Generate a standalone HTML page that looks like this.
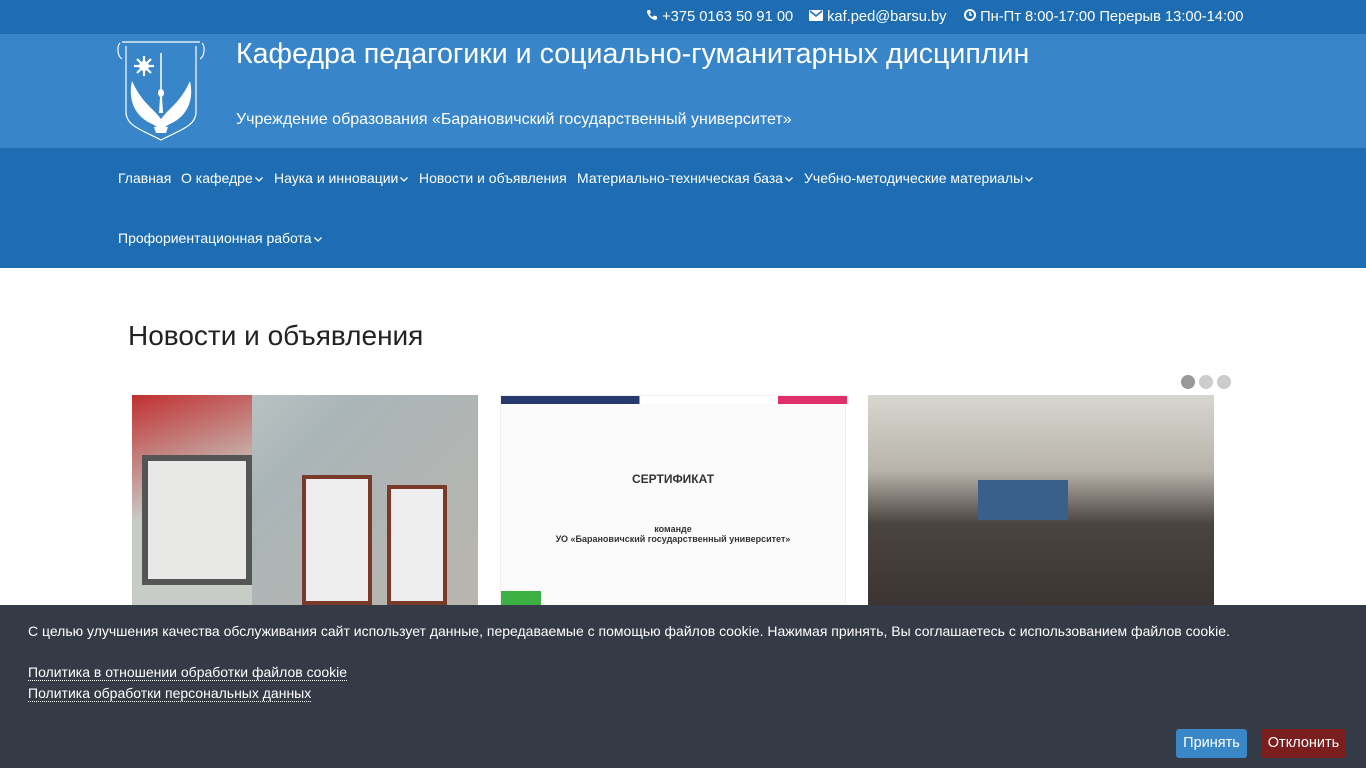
<!DOCTYPE html>
<html><head><meta charset="utf-8"><style>
*{margin:0;padding:0;box-sizing:border-box}
body{width:1366px;height:768px;overflow:hidden;font-family:"Liberation Sans",sans-serif;background:#fff;position:relative}
.top{height:34px;background:#1e6db3;color:#fff;font-size:14.7px;position:relative}
.top span{position:absolute;top:9px}
.head{height:114px;background:#3886c9;position:relative;color:#fff}
.head h1{position:absolute;left:236px;top:4px;font-weight:normal;font-size:28.6px}
.head p{position:absolute;left:236px;top:77px;font-size:16px}
.nav{height:120px;background:#1e6db3;color:#fff;font-size:14px;position:relative}
.nav span{position:absolute;white-space:nowrap}
.nav svg{margin-left:2px;vertical-align:1px}
h2{position:absolute;left:128px;top:320px;font-weight:normal;font-size:28px;color:#222}
.dot{position:absolute;top:375px;width:14px;height:14px;border-radius:50%;background:#ccc}
.card{position:absolute;top:395px;width:346px;height:215px}
.ck{position:absolute;left:0;top:605px;width:1366px;height:163px;background:#343a46;color:#fff;font-size:14px}
.ck a{color:#fff;text-decoration:none;border-bottom:1px dotted #fff;position:absolute;left:28px}
.btn{position:absolute;top:124px;height:29px;border-radius:3px;font-size:14.5px;line-height:29px;text-align:center}
</style></head><body>
<div class="top">
<span style="left:646px"><svg width="12" height="12" viewBox="0 0 12 12"><path d="M2 1l2 0 1 3-1.5 1a6 6 0 0 0 3 3L8 6.5l3 1v2c0 1-1 1.5-2 1.5C5 10 2 7 1 3c0-1 .5-2 1-2z" fill="#fff"/></svg> +375 0163 50 91 00</span>
<span style="left:809px"><svg width="14" height="11" viewBox="0 0 14 11"><rect width="14" height="11" rx="1" fill="#fff"/><path d="M1 1l6 5 6-5" stroke="#1e6db3" stroke-width="1.5" fill="none"/></svg> kaf.ped@barsu.by</span>
<span style="left:964px"><svg width="12" height="12" viewBox="0 0 12 12"><circle cx="6" cy="6" r="5" stroke="#fff" stroke-width="2" fill="none"/><path d="M6 3v3h2" stroke="#fff" stroke-width="1.5" fill="none"/></svg> Пн-Пт 8:00-17:00 Перерыв 13:00-14:00</span>
</div>
<div class="head">
<svg style="position:absolute;left:116px;top:5px" width="90" height="102" viewBox="0 0 90 102">
<path d="M6 3h78M10 7v66c0 14 16 18 35 28 19-10 35-14 35-28V7" fill="none" stroke="#fff" stroke-width="1.2"/>
<path d="M4 4c-3 3-3 13 2 16M86 4c3 3 3 13-2 16" fill="none" stroke="#fff" stroke-width="1.2"/>
<g fill="#fff"><circle cx="28" cy="27" r="5"/><path d="M28 17v20M18 27h20M21 20l14 14M35 20L21 34" stroke="#fff" stroke-width="2.2"/>
<path d="M45 14v40" stroke="#fff" stroke-width="1.5"/><ellipse cx="45" cy="54" rx="3" ry="4"/><path d="M44 58h2l1 16h-4z"/>
<path d="M45 80C36 68 26 64 16 42c-4 18 2 34 18 42 5 2 8 5 11 8 3-3 6-6 11-8 16-8 22-24 18-42C64 64 54 68 45 80z"/>
<path d="M38 88h14l-2 6H40z"/></g></svg>
<h1>Кафедра педагогики и социально-гуманитарных дисциплин</h1>
<p>Учреждение образования «Барановичский государственный университет»</p>
</div>
<div class="nav">
<span style="left:118px;top:22px">Главная</span>
<span style="left:181px;top:22px">О кафедре<svg width="8" height="5" viewBox="0 0 8 5"><path d="M.5.5L4 4 7.5.5" stroke="#fff" fill="none" stroke-width="1.3"/></svg></span>
<span style="left:274px;top:22px">Наука и инновации<svg width="8" height="5" viewBox="0 0 8 5"><path d="M.5.5L4 4 7.5.5" stroke="#fff" fill="none" stroke-width="1.3"/></svg></span>
<span style="left:419px;top:22px">Новости и объявления</span>
<span style="left:577px;top:22px">Материально-техническая база<svg width="8" height="5" viewBox="0 0 8 5"><path d="M.5.5L4 4 7.5.5" stroke="#fff" fill="none" stroke-width="1.3"/></svg></span>
<span style="left:804px;top:22px">Учебно-методические материалы<svg width="8" height="5" viewBox="0 0 8 5"><path d="M.5.5L4 4 7.5.5" stroke="#fff" fill="none" stroke-width="1.3"/></svg></span>
<span style="left:118px;top:82px">Профориентационная работа<svg width="8" height="5" viewBox="0 0 8 5"><path d="M.5.5L4 4 7.5.5" stroke="#fff" fill="none" stroke-width="1.3"/></svg></span>
</div>
<h2>Новости и объявления</h2>
<div class="dot" style="left:1181px;background:#999"></div><div class="dot" style="left:1199px"></div><div class="dot" style="left:1217px"></div>
<div class="card" style="left:132px;background:linear-gradient(135deg,#c9d1cc 0%,#aab5b8 40%,#b9b5ad 100%)">
<div style="position:absolute;left:0;top:0;width:120px;height:215px;background:linear-gradient(160deg,#c03030 0%,#c8ccc6 50%)"></div>
<div style="position:absolute;left:10px;top:60px;width:110px;height:130px;background:#e8e8e6;border:6px solid #555"></div>
<div style="position:absolute;left:170px;top:80px;width:70px;height:130px;background:#eee;border:4px solid #7a3a2a"></div>
<div style="position:absolute;left:255px;top:90px;width:60px;height:120px;background:#eee;border:4px solid #7a3a2a"></div>
</div>
<div class="card" style="left:500px;background:#fbfbfb;border:1px solid #eee;font-size:9px;text-align:center;color:#333">
<div style="position:absolute;left:0;top:0;width:346px;height:8px;background:linear-gradient(90deg,#283a6b,#283a6b 40%,#fff 40%,#fff 80%,#e0306a 80%)"></div>
<div style="position:absolute;top:76px;width:100%;font-size:12px;font-weight:bold">СЕРТИФИКАТ</div>
<div style="position:absolute;top:128px;width:100%;font-weight:bold">команде<br>УО «Барановичский государственный университет»</div>
<div style="position:absolute;left:0;top:195px;width:40px;height:20px;background:#3cb043"></div>
</div>
<div class="card" style="left:868px;background:linear-gradient(180deg,#d8d6d0 0%,#b8b4ab 35%,#4a4440 60%,#3a3330 100%)">
<div style="position:absolute;left:110px;top:85px;width:90px;height:40px;background:#3a5f8a"></div>
</div>
<div class="ck">
<div style="position:absolute;left:28px;top:18px">С целью улучшения качества обслуживания сайт использует данные, передаваемые с помощью файлов cookie. Нажимая принять, Вы соглашаетесь с использованием файлов cookie.</div>
<a style="top:59px">Политика в отношении обработки файлов cookie</a>
<a style="top:80px">Политика обработки персональных данных</a>
<div class="btn" style="left:1176px;width:71px;background:#3a87c8">Принять</div>
<div class="btn" style="left:1261px;width:85px;background:#7a1e1e">Отклонить</div>
</div>
</body></html>
